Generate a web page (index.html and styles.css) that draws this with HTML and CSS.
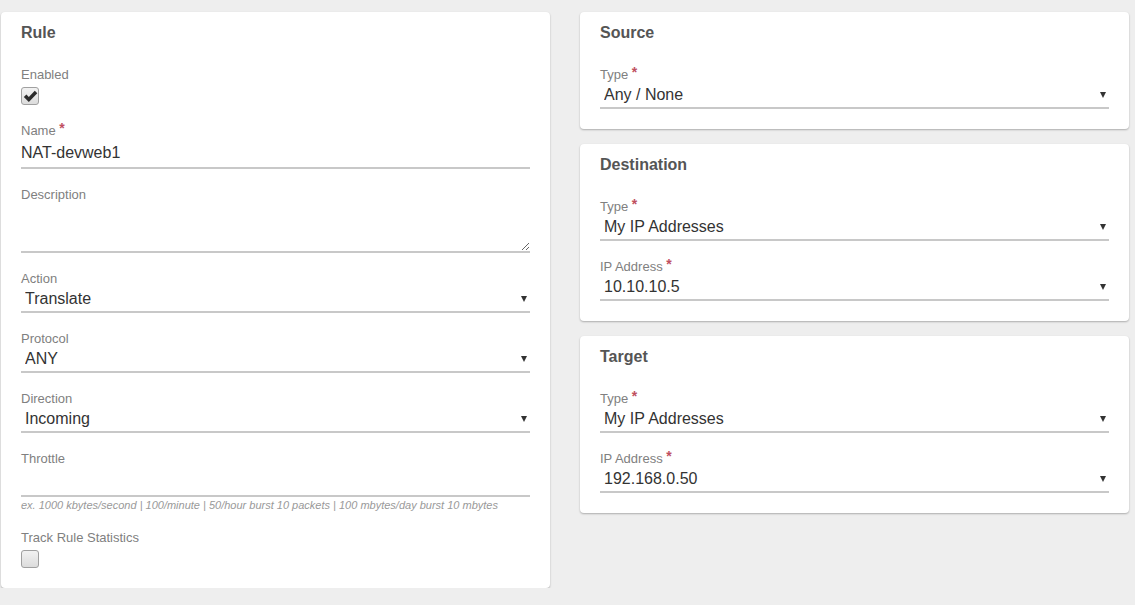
FILE: index.html
```html
<!DOCTYPE html>
<html lang="en">
<head>
<meta charset="utf-8">
<title>NAT Rule</title>
<link rel="stylesheet" href="styles.css">
</head>
<body>
<div class="page">
  <section class="card">
    <h2 class="card-title">Rule</h2>
    <div class="field">
      <div class="label">Enabled</div>
      <span class="checkbox checked"><svg viewBox="0 0 16 14" width="15" height="13"><path d="M0.8 7.6 L3.6 4.9 L6.2 7.6 L12.6 0.9 L15.3 3.6 L6.2 13 Z" fill="#2b2b2b"/></svg></span>
    </div>
    <div class="field">
      <div class="label">Name <span class="req">*</span></div>
      <input class="input" type="text" value="NAT-devweb1">
    </div>
    <div class="field">
      <div class="label">Description</div>
      <textarea class="textarea"></textarea>
    </div>
    <div class="field">
      <div class="label">Action</div>
      <div class="select-wrap"><select class="select"><option>Translate</option></select></div>
    </div>
    <div class="field">
      <div class="label">Protocol</div>
      <div class="select-wrap"><select class="select"><option>ANY</option></select></div>
    </div>
    <div class="field">
      <div class="label">Direction</div>
      <div class="select-wrap"><select class="select"><option>Incoming</option></select></div>
    </div>
    <div class="field">
      <div class="label">Throttle</div>
      <input class="input" type="text" value="">
      <div class="help">ex. 1000 kbytes/second | 100/minute | 50/hour burst 10 packets | 100 mbytes/day burst 10 mbytes</div>
    </div>
    <div class="field">
      <div class="label">Track Rule Statistics</div>
      <span class="checkbox"></span>
    </div>
  </section>

  <div class="column">
    <section class="card">
      <h2 class="card-title">Source</h2>
      <div class="field">
        <div class="label">Type <span class="req">*</span></div>
        <div class="select-wrap"><select class="select"><option>Any / None</option></select></div>
      </div>
    </section>
    <section class="card">
      <h2 class="card-title">Destination</h2>
      <div class="field">
        <div class="label">Type <span class="req">*</span></div>
        <div class="select-wrap"><select class="select"><option>My IP Addresses</option></select></div>
      </div>
      <div class="field">
        <div class="label">IP Address <span class="req">*</span></div>
        <div class="select-wrap"><select class="select"><option>10.10.10.5</option></select></div>
      </div>
    </section>
    <section class="card">
      <h2 class="card-title">Target</h2>
      <div class="field">
        <div class="label">Type <span class="req">*</span></div>
        <div class="select-wrap"><select class="select"><option>My IP Addresses</option></select></div>
      </div>
      <div class="field">
        <div class="label">IP Address <span class="req">*</span></div>
        <div class="select-wrap"><select class="select"><option>192.168.0.50</option></select></div>
      </div>
    </section>
  </div>
</div>
</body>
</html>
```

FILE: styles.css
```css
* { box-sizing: border-box; }

html, body {
  margin: 0;
  background: #eeeeee;
  font-family: "Liberation Sans", Arial, sans-serif;
}

.page {
  display: grid;
  grid-template-columns: 549px 549px;
  column-gap: 30px;
  align-items: start;
  padding: 12px 0 0 1px;
}

.column {
  display: flex;
  flex-direction: column;
  gap: 15px;
}

.card {
  background: #fff;
  border-radius: 4px;
  box-shadow: 0 1px 2px rgba(0, 0, 0, 0.28);
  padding: 11px 20px 20px;
}

.card-title {
  margin: 0 0 24px;
  font-size: 16px;
  line-height: 20px;
  font-weight: bold;
  color: #555;
}

.field {
  margin-bottom: 18px;
}
.field:last-child {
  margin-bottom: 0;
}

.label {
  font-size: 13px;
  line-height: 16px;
  height: 16px;
  color: #808080;
}

.req {
  color: #c0505f;
  font-weight: bold;
  font-size: 14px;
  line-height: 0;
  vertical-align: 2px;
}

.input {
  display: block;
  width: 100%;
  height: 30px;
  margin: 0;
  padding: 4px 0 4px;
  border: 0;
  border-bottom: 2px solid #c8c8c8;
  background: transparent;
  font-family: "Liberation Sans", Arial, sans-serif;
  font-size: 16px;
  color: #333;
  outline: none;
}

.textarea {
  display: block;
  width: 100%;
  height: 50px;
  margin: 0;
  padding: 4px 0;
  border: 0;
  border-bottom: 2px solid #c8c8c8;
  background: transparent;
  font-family: "Liberation Sans", Arial, sans-serif;
  font-size: 16px;
  color: #333;
  resize: vertical;
  outline: none;
}

.select-wrap {
  position: relative;
}
.select-wrap::after {
  content: "";
  position: absolute;
  right: 3px;
  top: 9px;
  border-left: 3px solid transparent;
  border-right: 3px solid transparent;
  border-top: 6px solid #333;
  pointer-events: none;
}

.select {
  display: block;
  width: 100%;
  height: 26px;
  margin: 0;
  padding: 0 16px 1px 4px;
  border: 0;
  border-radius: 0;
  border-bottom: 2px solid #c8c8c8;
  background: transparent;
  -webkit-appearance: none;
  appearance: none;
  font-family: "Liberation Sans", Arial, sans-serif;
  font-size: 16px;
  color: #333;
  outline: none;
}

.help {
  margin-top: 1px;
  font-size: 11px;
  line-height: 14px;
  font-style: italic;
  color: #999;
}

.checkbox {
  display: flex;
  align-items: center;
  justify-content: center;
  width: 18px;
  height: 18px;
  margin-top: 4px;
  border: 1px solid #a0a0a0;
  border-radius: 3px;
  background: linear-gradient(#f2f2f2, #dcdcdc);
}
```
